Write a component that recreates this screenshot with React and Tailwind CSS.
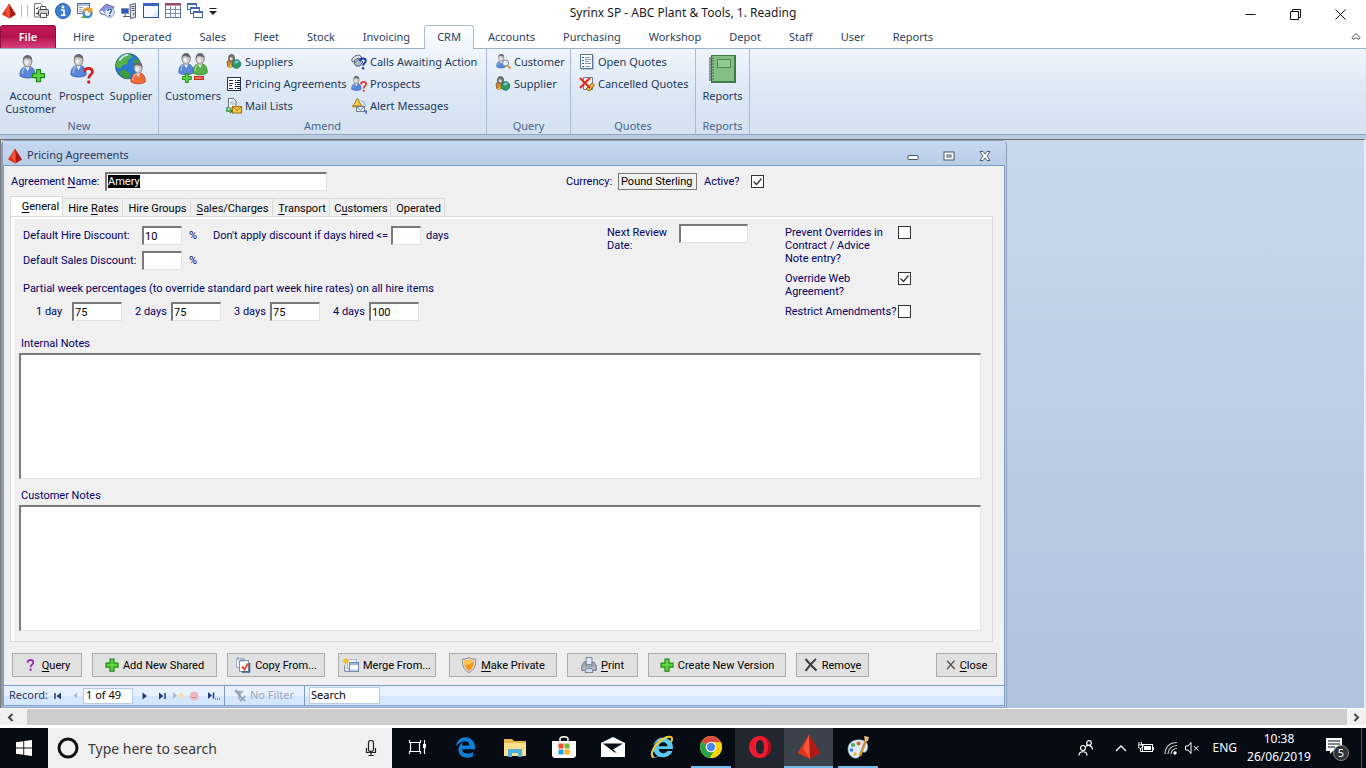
import React from "react";
import { FaEdgeLegacy, FaInternetExplorer } from "react-icons/fa6";

/* ---------- icon drawings ---------- */

const Svg = ({ size = 16, box = "0 0 16 16", className = "", children }) => (
  <svg width={size} height={size} viewBox={box} className={`block shrink-0 ${className}`} fill="none" aria-hidden="true">
    {children}
  </svg>
);

const Pyramid = ({ size = 16, className }) => (
  <Svg size={size} className={className}>
    <path d="M8 .5 1 11.500l7.500 4z" fill="#e2341d" />
    <path d="M8 .5 15 11.500l-6.500 4z" fill="#b01a14" />
    <path d="M8 .5 4.500 9l4 6.500z" fill="#f4573a" />
  </Svg>
);

const Person = ({ x = 0, y = 0, s = 1, body = "#5b86d8", dark = "#2c56ad" }) => (
  <g transform={`translate(${x} ${y}) scale(${s})`}>
    <path d="M1 22c0-6 2-9 6-10h4c4 1 6 4 6 10-4 3-12 3-16 0z" fill={body} stroke={dark} strokeWidth=".8" />
    <path d="M3.500 20c0-4 1-6 3-7" stroke="#fff" strokeOpacity=".45" strokeWidth="1.500" />
    <path d="m6.500 12 2.500 5 2.500-5z" fill="#eef3fb" />
    <ellipse cx="9" cy="6.500" rx="4.600" ry="6" fill="#c9c9c9" stroke="#6b6b6b" strokeWidth=".8" />
    <path d="M4.300 6C4 2 6 .2 9 .2S14.200 2 13.700 6C12.500 3.500 10 4 7.500 3.200 6 3.500 5 4 4.300 6z" fill="#6a6a6a" />
    <ellipse cx="8" cy="8" rx="2" ry="2.600" fill="#ececec" />
  </g>
);

const Plus = ({ x = 0, y = 0, s = 1 }) => (
  <path
    transform={`translate(${x} ${y}) scale(${s})`}
    d="M4.500.7h4v4h4v4h-4v4h-4v-4h-4v-4h4z"
    fill="#5fd33c"
    stroke="#1f8a1b"
    strokeWidth="1.200"
  />
);

const Question = ({ x = 0, y = 0, s = 1, color = "#d3201c" }) => (
  <g transform={`translate(${x} ${y}) scale(${s})`}>
    <path d="M1.500 5C1.500 2.500 3 1.300 5.200 1.300S9 2.500 9 4.500C9 7.500 5.500 7 5.500 11" stroke={color} strokeWidth="2.500" />
    <circle cx="5.500" cy="14.300" r="1.600" fill={color} />
  </g>
);

const Globe = ({ x = 0, y = 0, s = 1 }) => (
  <g transform={`translate(${x} ${y}) scale(${s})`}>
    <circle cx="12" cy="12" r="11.500" fill="#2b79cf" stroke="#1d4f98" strokeWidth=".8" />
    <path d="M2 7C5 1 11 0 14 1l2 3-4 2-1 4-4 1-2 3-4-1c-1-2 0-4 1-6z" fill="#58b147" />
    <path d="M4 17l5-2 4 3 0 5C8 24 5 21 4 17zM16 6l5 0c2 3 2 6 2 8l-4-2z" fill="#3f9c3c" />
    <path d="M4 7c2-3 5-5 8-5.500" stroke="#cfe6fb" strokeWidth="1.500" />
  </g>
);

const AccountCustomerIcon = () => (
  <Svg size={32} box="0 0 32 32"><Person x={4} y={2} s={0.95} /><Plus x={17} y={16} /></Svg>
);
const ProspectIcon = () => (
  <Svg size={32} box="0 0 32 32"><Person x={4} y={1} s={0.95} /><Question x={17} y={14} s={1.05} /></Svg>
);
const SupplierIcon = () => (
  <Svg size={32} box="0 0 32 32">
    <Globe x={0} y={0} s={1.1} />
    <Person x={15} y={9} s={0.9} body="#ef6a3a" dark="#b93a18" />
  </Svg>
);
const CustomersIcon = () => (
  <Svg size={32} box="0 0 32 32">
    <Person x={15} y={0} s={0.9} body="#55b04a" dark="#2d7c28" />
    <Person x={1} y={0} s={0.9} />
    <Plus x={5} y={20} s={0.75} />
    <rect x="17.500" y="23.500" width="9" height="3" fill="#f26b5b" stroke="#c62c20" />
  </Svg>
);
const ReportsBookIcon = () => (
  <Svg size={32} box="0 0 32 32">
    <rect x="4" y="2" width="25" height="28" fill="#3c7a44" />
    <rect x="4.500" y="2.500" width="23" height="26" fill="#86bf86" stroke="#3f7f47" />
    <rect x="10.500" y="6.500" width="13" height="8" fill="#93c993" stroke="#4b8850" />
    {[5, 8, 11, 14, 17, 20, 23, 26].map((y) => (
      <path key={y} d={`M2 ${y}h5M2 ${y + 1.2}h3`} stroke="#4a5a4c" strokeWidth=".9" />
    ))}
  </Svg>
);

const SuppliersSmall = () => (
  <Svg>
    <path d="M1 8c1-3 8-3 9 0v2L6 13H2z" fill="#d9862f" stroke="#6d4a1c" strokeWidth=".8" />
    <ellipse cx="5.500" cy="4" rx="3" ry="3.500" fill="#7a7a6c" stroke="#45453b" strokeWidth=".8" />
    <ellipse cx="5.200" cy="5" rx="1.500" ry="1.800" fill="#dedad0" />
    <path d="M2 13l3-3 1 4z" fill="#e9c02e" />
    <circle cx="10.500" cy="10" r="4.300" fill="#2f9a62" stroke="#1c6b6b" strokeWidth=".8" />
    <path d="M8 8.500c1-2 4-2 5-1l-2.500 2z" fill="#7ccaf0" />
  </Svg>
);
const AgreementsSmall = () => (
  <Svg>
    <rect x="1.500" y="1.500" width="13" height="13" fill="#fff" stroke="#26344e" />
    <path d="M3 4.500h4M3 7.500h4M3 9.500h3M3 12.500h4" stroke="#1d2b46" />
    <path d="M9 4.500h1M11 4.500h3M9 6.500h5M9 8.500h1M11 8.500h3M9 10.500h5M9 12.500h1M11 12.500h3" stroke="#1d2b46" />
  </Svg>
);
const MailSmall = () => (
  <Svg>
    <path d="M2.500.5h5l2.500 2.500v7h-7.500z" fill="#fff" stroke="#5f6f86" />
    <path d="M4 4h4M4 6h5" stroke="#8fa0b8" />
    <path d="M1 9v4h5M4 11l2 2-2 2" stroke="#2d9b34" strokeWidth="1.500" />
    <rect x="6.500" y="8.500" width="9" height="6.500" fill="#f4c744" stroke="#a27414" />
    <path d="m7 9 4 3.500L15 9" stroke="#a27414" />
  </Svg>
);
const CallsSmall = () => (
  <Svg>
    <path d="M.700 6c1-4 7-6 9-4l1 2-2 1-1-1-4 2v2H1.500z" fill="#dfe6ee" stroke="#4a586d" />
    <path d="M3 9l5-4 4 3-3 4H5z" fill="#aebccc" stroke="#4a586d" />
    <Question x={8} y={3.500} s={0.75} color="#1238b8" />
  </Svg>
);
const ProspectSmall = () => (
  <Svg><Person x={0} y={0} s={0.6} /><Question x={9} y={5} s={0.68} color="#e0392c" /></Svg>
);
const AlertSmall = () => (
  <Svg>
    <path d="M5.500 1h2l.5 3 3 4H2l2.500-4z" fill="#f7cf4d" stroke="#a8801a" />
    <path d="M1 8.500h11" stroke="#b98a1a" strokeWidth="1.500" />
    <rect x="5.500" y="8.500" width="8" height="5" fill="#e8eef6" stroke="#6c7c92" />
    <path d="m6 9 3.500 3L13 9" stroke="#6c7c92" />
    <path d="M13 13h3v2h-2" stroke="#2350b0" strokeWidth="1.200" />
    <path d="M10 3c3 0 4 2 4 5" stroke="#8fa0b8" />
  </Svg>
);
const CustomerQuerySmall = () => (
  <Svg>
    <Person x={1} y={0} s={0.58} />
    <circle cx="10.500" cy="9" r="3" fill="#e6f1fb" stroke="#7a8797" />
    <path d="m12.500 11.500 3 3" stroke="#e39a2e" strokeWidth="2" />
  </Svg>
);
const OpenQuotesSmall = () => (
  <Svg>
    <rect x="2.500" y="1.500" width="12" height="14" fill="#7b93b8" />
    <rect x="1.500" y=".5" width="12" height="14" fill="#fff" stroke="#5d7399" />
    <path d="M3 3.500h2M3 6.500h2M3 9.500h2M3 12.500h2" stroke="#2f5fae" />
    <path d="M6 3.500h5M6 5.500h6M6 7.500h4M6 9.500h6M6 12.500h5" stroke="#8597b5" />
  </Svg>
);
const CancelledSmall = () => (
  <Svg>
    <path d="M4.500 1.500h9v12h-9z" fill="#f4f6f9" stroke="#6c7c92" />
    <path d="M7 13l6-6 2.500 2-5 6z" fill="#f0b840" stroke="#8c6414" />
    <path d="m1 2 10 10M11 2 1 12" stroke="#e3301f" strokeWidth="2.300" />
  </Svg>
);

const PrintPreviewIcon = () => (
  <Svg>
    <path d="M1.500.5h6l2 2V14h-8z" fill="#fff" stroke="#777" />
    <path d="M3 5l1 1 1.500-2M3 10l1 1 1.500-2" stroke="#333" />
    <path d="M7.500 6.500V3.500h5l1 3" fill="#fff" stroke="#555" />
    <rect x="5.500" y="6.500" width="10" height="6" rx="1" fill="#c9ccd0" stroke="#444" />
    <path d="M7.500 10.500h6v4h-6z" fill="#fff" stroke="#555" />
  </Svg>
);
const InfoIcon = () => (
  <Svg>
    <circle cx="8" cy="8" r="7.500" fill="#3f7fd0" stroke="#2a5da8" />
    <circle cx="8" cy="4" r="1.400" fill="#fff" />
    <path d="M6 7h3v5M5.800 12.200h4.600" stroke="#fff" strokeWidth="1.600" />
  </Svg>
);
const RefreshPageIcon = () => (
  <Svg>
    <rect x=".5" y=".5" width="12" height="10" fill="#fff" stroke="#4b6ea8" />
    <path d="M2 4.500h4M2 6.500h3M2 8.500h4" stroke="#7e97c0" />
    <path d="M1 2h11" stroke="#a9c2e6" strokeWidth="2" />
    <circle cx="10.500" cy="10" r="4" fill="#eaf3fd" stroke="#3f86d6" strokeWidth="2.300" />
    <path d="M6.500 9a4 4 0 0 1 7.500-1.500M11 8.500h3.500V5" stroke="#f0a12c" strokeWidth="2" />
    <path d="M4 15l3-3 2.500 3z" fill="#4aa33c" />
  </Svg>
);
const HelpBookIcon = () => (
  <Svg>
    <path d="M1 7 7 1l8 3-5 8-8-1z" fill="#8e8fd8" stroke="#7070b8" />
    <path d="M1 7v3l8 3 1-1" fill="#fff" stroke="#6f6fb6" />
    <circle cx="10.500" cy="9.500" r="4.800" fill="#dfe9fb" stroke="#7f98d0" />
    <Question x={8} y={5.500} s={0.5} color="#2446a8" />
  </Svg>
);
const ServerIcon = () => (
  <Svg>
    <path d="M9 1.500 14.500.5v14l-5 1z" fill="#d7dbe2" stroke="#596477" />
    <path d="M10.500 3.500h3M10.500 5.500h3M10.500 7.500h3" stroke="#596477" />
    <rect x="12" y="10" width="1.500" height="2" fill="#39a33a" />
    <rect x=".5" y="5.500" width="7" height="5" fill="#2e55c8" stroke="#8a93a6" />
    <path d="M4 11v2M2 13.500h7" stroke="#596477" />
  </Svg>
);
const WindowIcon = () => (
  <Svg>
    <rect x=".5" y=".5" width="15" height="14" fill="#f7faff" stroke="#30559c" />
    <path d="M0 1.500h16" stroke="#3a65b8" strokeWidth="3" />
    <path d="M8 14l7-7v7z" fill="#dfeafa" />
  </Svg>
);
const DatasheetIcon = () => (
  <Svg>
    <rect x=".5" y=".5" width="15" height="14" fill="#fff" stroke="#5b6fa6" />
    <path d="M0 1.500h16" stroke="#a8405a" strokeWidth="2" />
    <path d="M5.500 3v12M10.500 3v12M1 6.500h14M1 10.500h14" stroke="#7b8cbb" />
  </Svg>
);
const CascadeIcon = () => (
  <Svg>
    <g fill="#fff" stroke="#3f66a8">
      <rect x=".5" y=".5" width="9" height="6" />
      <rect x="3.500" y="4.500" width="9" height="6" />
      <rect x="6.500" y="8.500" width="9" height="6" />
    </g>
    <path d="M1 1.500h8M4 5.500h8M7 9.500h8" stroke="#3f66a8" />
  </Svg>
);

const PlusIcon = () => <Svg size={14} box="0 0 14 14"><Plus x={0.5} y={0.5} /></Svg>;
const PurpleQuestion = () => <Svg size={14} box="0 0 14 14"><Question x={2.500} y={1} s={0.75} color="#9b2fae" /></Svg>;
const CopyIcon = () => (
  <Svg>
    <path d="M1.500 1.500h6v9h-6z" fill="#eef2f8" stroke="#a3b0c4" />
    <path d="M4.500 3.500h9v11h-9z" fill="#fff" stroke="#7c92b4" />
    <path d="M3 0v3M6 1v4M9 1v4" stroke="#8393ab" />
    <path d="M14.500 6v9H7" stroke="#3e5c8f" strokeWidth="1.500" />
    <path d="m7 9.500 2.500 3L13 6.500" stroke="#e8552c" strokeWidth="2" />
  </Svg>
);
const MergeIcon = () => (
  <Svg>
    <rect x="4.500" y="2.500" width="9" height="9" fill="#e9f0f9" stroke="#a5b9d4" />
    <rect x="6.500" y="5.500" width="9" height="9" fill="#fff" stroke="#6f8ab0" />
    <path d="M7 7h8" stroke="#9db5d6" strokeWidth="2" />
    <path d="M7 13h8" stroke="#c7d6ea" strokeWidth="2" />
    <path d="M0 4h6M3 1v6M1 2l4 4M5 2 1 6" stroke="#f2c230" strokeWidth="1.300" />
    <path d="M1.500 8v6.500H6" stroke="#8393ab" />
  </Svg>
);
const ShieldIcon = () => (
  <Svg>
    <path d="M8 .5C6 2 4 2 1.500 2c-.5 6 1 11 6.500 13.500C13.500 13 15 8 14.500 2 12 2 10 2 8 .5z" fill="#e0e0e0" stroke="#8d8d8d" />
    <path d="M8 2.300C6.500 3.500 5 3.500 3 3.500c0 5 1.500 8.500 5 10.500 3.500-2 5-5.500 5-10.500-2 0-3.500 0-5-1.200z" fill="#f59a1d" />
    <path d="M8 2.300C6.500 3.500 5 3.500 3 3.500c0 2 .2 3.500.8 5L12.900 5V3.500c-2 0-3.400 0-4.900-1.200z" fill="#fcc45a" />
  </Svg>
);
const PrinterIcon = () => (
  <Svg>
    <path d="M5 .5h6v7H5z" fill="#dbe7f7" stroke="#7d8795" />
    <path d="M3 5 .700 9v4.500h14.600V9L13 5h-2v4H5V5z" fill="#a4a8b1" stroke="#6d737e" strokeWidth=".8" />
    <path d="M2 11h12" stroke="#d9dce2" />
    <path d="M5 11.500h6l1 4H4z" fill="#cfe0f6" stroke="#7d8795" />
  </Svg>
);
const CrossIcon = ({ size = 14, color = "#3c3c3c" }) => (
  <Svg size={size} box="0 0 14 14"><path d="M1.500 1c3 3.500 7 8 11 11.500M12 1C8 4.500 5 8.500 1.500 13" stroke={color} strokeWidth="2" /></Svg>
);

/* ---------- title bar and tabs ---------- */

const quickTools = [
  ["Print preview", PrintPreviewIcon], ["Information", InfoIcon], ["Refresh", RefreshPageIcon], ["Help", HelpBookIcon],
  ["Server", ServerIcon], ["Form view", WindowIcon], ["Datasheet", DatasheetIcon], ["Cascade", CascadeIcon],
];

function TitleBar() {
  return (
    <header className="grid h-[25px] grid-cols-[1fr_auto_1fr] items-center">
      <div className="flex items-center pb-1">
        <Pyramid size={16} className="ml-px" />
        <span className="ml-1 h-3 w-[7px] border-x border-[#b8b8b8]" />
        <div className="ml-[5px] flex gap-[6px]">
          {quickTools.map(([name, Icon]) => (
            <button key={name} aria-label={name} className="h-4 w-4"><Icon /></button>
          ))}
        </div>
        <button aria-label="Customize toolbar" className="ml-[6px]">
          <Svg size={8} box="0 0 8 8"><path d="M.5 1.500h7" stroke="#222" /><path d="M0 4h8L4 8z" fill="#222" /></Svg>
        </button>
      </div>
      <h1 className="text-[12px] leading-4 text-[#1a1a1a]">Syrinx SP - ABC Plant &amp; Tools, 1. Reading</h1>
      <div className="flex items-center justify-end gap-[34px] pt-[3px] pr-5">
        <button aria-label="Minimize"><Svg size={11} box="0 0 11 11"><path d="M.5 5.500h10" stroke="#111" /></Svg></button>
        <button aria-label="Restore"><Svg size={11} box="0 0 11 11"><path d="M.5 2.500h8v8h-8zM2.500 2V.5h8v8H9" stroke="#111" /></Svg></button>
        <button aria-label="Close"><Svg size={11} box="0 0 11 11"><path d="m.5.5 10 10M10.500.5l-10 10" stroke="#111" /></Svg></button>
      </div>
    </header>
  );
}

const tabs = ["Hire", "Operated", "Sales", "Fleet", "Stock", "Invoicing", "CRM", "Accounts", "Purchasing", "Workshop", "Depot", "Staff", "User", "Reports"];

function RibbonTabs() {
  return (
    <nav className="flex h-6 items-end border-b border-[#9fb2c9] text-[11px] text-[#2b4163]">
      <button className="mr-[3px] h-[23px] w-14 rounded-t-[3px] border border-b-0 border-[#8e0d40] bg-linear-to-b from-[#c2185b] via-[#b3114f] to-[#d93f7d] pt-px font-semibold text-white">File</button>
      {tabs.map((t) =>
        t === "CRM" ? (
          <button key={t} className="-mb-px h-6 rounded-t-[3px] border border-b-0 border-[#a9bbd2] bg-linear-to-b from-white to-[#eff5fc] px-3">{t}</button>
        ) : (
          <button key={t} className="h-[23px] px-[14px] pt-[2px]">{t}</button>
        )
      )}
      <button aria-label="Collapse ribbon" className="mr-[5px] mb-[7px] ml-auto">
        <Svg size={10} box="0 0 10 10"><path d="M1 6.500 5 2.500l4 4-1 1.500H6.500L5 6.500 3.500 8H2z" stroke="#444" /></Svg>
      </button>
    </nav>
  );
}

/* ---------- ribbon ---------- */

const Group = ({ label, className, children }) => (
  <section className={`flex flex-col border-r border-[#a9bbd2] ${className}`}>
    <div className="flex flex-1">{children}</div>
    <h2 className="h-4 text-center leading-4 text-[#4a648c]">{label}</h2>
  </section>
);
const Large = ({ icon: Icon, className, children }) => (
  <button className={`flex flex-col items-center pt-1 leading-[13px] ${className}`}>
    <Icon />
    <span className="mt-1 block w-full text-center">{children}</span>
  </button>
);
const Small = ({ icon: Icon, children }) => (
  <button className="flex h-[22px] items-center gap-[3px] whitespace-nowrap"><Icon />{children}</button>
);

function Ribbon() {
  return (
    <div className="flex h-[86px] border-b border-[#8ea4c1] bg-linear-to-b from-[#eff5fc] via-[#dde8f5] to-[#d5e1f0] text-[11px] text-[#1e395b]">
      <Group label="New" className="w-[159px]">
        <Large icon={AccountCustomerIcon} className="ml-[5px] w-[51px]">Account<br />Customer</Large>
        <Large icon={ProspectIcon} className="w-[51px]">Prospect</Large>
        <Large icon={SupplierIcon} className="w-[48px]">Supplier</Large>
      </Group>
      <Group label="Amend" className="w-[328px]">
        <Large icon={CustomersIcon} className="ml-[5px] w-[58px]">Customers</Large>
        <div className="ml-1 w-[125px] pt-[2px]">
          <Small icon={SuppliersSmall}>Suppliers</Small>
          <Small icon={AgreementsSmall}>Pricing Agreements</Small>
          <Small icon={MailSmall}>Mail Lists</Small>
        </div>
        <div className="pt-[2px]">
          <Small icon={CallsSmall}>Calls Awaiting Action</Small>
          <Small icon={ProspectSmall}>Prospects</Small>
          <Small icon={AlertSmall}>Alert Messages</Small>
        </div>
      </Group>
      <Group label="Query" className="w-[84px]">
        <div className="pt-[2px] pl-2">
          <Small icon={CustomerQuerySmall}>Customer</Small>
          <Small icon={SuppliersSmall}>Supplier</Small>
        </div>
      </Group>
      <Group label="Quotes" className="w-[125px]">
        <div className="pt-[2px] pl-2">
          <Small icon={OpenQuotesSmall}>Open Quotes</Small>
          <Small icon={CancelledSmall}>Cancelled Quotes</Small>
        </div>
      </Group>
      <Group label="Reports" className="w-[54px]">
        <Large icon={ReportsBookIcon} className="w-full">Reports</Large>
      </Group>
    </div>
  );
}

/* ---------- form ---------- */

const sunken = "border-t-2 border-l-2 border-r border-b border-t-[#7a7a7a] border-l-[#7a7a7a] border-r-[#e3e3e3] border-b-[#e3e3e3] bg-white text-black";

const Field = ({ id, className, value = "", label }) => (
  <input id={id} aria-label={label} defaultValue={value} className={`h-[19px] pl-px outline-none ${sunken} ${className}`} />
);

const Tick = ({ id, checked }) => (
  <span className="grid h-[13px] w-[13px] shrink-0">
    <input id={id} type="checkbox" defaultChecked={checked} className="peer col-start-1 row-start-1 h-[13px] w-[13px] appearance-none border border-[#333] bg-white" />
    <svg viewBox="0 0 13 13" className="pointer-events-none invisible col-start-1 row-start-1 h-[13px] w-[13px] peer-checked:visible" fill="none" aria-hidden="true">
      <path d="m2.500 6.500 3 3 5-6" stroke="#333" strokeWidth="1.300" />
    </svg>
  </span>
);

const U = ({ children }) => <span className="underline underline-offset-2">{children}</span>;

const formTabs = [
  ["w-[60px]", <>Hire <U>R</U>ates</>], ["w-[68px]", <>Hire Groups</>], ["w-[82px]", <><U>S</U>ales/Charges</>],
  ["w-[57px]", <><U>T</U>ransport</>], ["w-[61px]", <>C<U>u</U>stomers</>], ["w-[54px]", <>Operated</>],
];

const PushButton = ({ icon, className, children }) => (
  <button className={`flex h-6 shrink-0 items-center justify-center gap-1 border border-[#adadad] bg-[#e1e1e1] whitespace-nowrap text-black ${className}`}>
    {icon}
    <span>{children}</span>
  </button>
);

function GeneralPanel() {
  return (
    <div className="mr-[11px] ml-[6px] flex flex-1 flex-col border border-[#d9d9d9] bg-[#f0f0f0] pr-[11px] pb-[10px] shadow-[inset_3px_2px_0_#fff]">
      <div className="flex items-start pt-[9px] pl-3">
        <div className="w-[584px] shrink-0 whitespace-nowrap">
          <div className="flex h-[19px] items-center">
            <label htmlFor="hireDisc" className="w-[119px]">Default Hire Discount:</label>
            <Field id="hireDisc" value="10" className="w-10" />
            <span className="ml-[7px] w-6">%</span>
            <label htmlFor="minDays" className="w-[178px]">Don't apply discount if days hired &lt;=</label>
            <Field id="minDays" className="w-[30px]" />
            <span className="ml-[5px]">days</span>
          </div>
          <div className="mt-[6px] flex h-[19px] items-center">
            <label htmlFor="salesDisc" className="w-[119px]">Default Sales Discount:</label>
            <Field id="salesDisc" className="w-10" />
            <span className="ml-[7px]">%</span>
          </div>
          <p className="mt-3">Partial week percentages (to override standard part week hire rates) on all hire items</p>
          <div className="mt-[7px] flex gap-[13px] pl-[13px]">
            {[["1 day", "75"], ["2 days", "75"], ["3 days", "75"], ["4 days", "100"]].map(([l, v]) => (
              <div key={l} className="flex items-center">
                <label htmlFor={l} className="w-9">{l}</label>
                <Field id={l} value={v} className="w-[50px]" />
              </div>
            ))}
          </div>
        </div>
        <div className="flex w-[178px] items-start">
          <label htmlFor="review" className="w-[72px] pr-1">Next Review Date:</label>
          <Field id="review" className="-mt-[2px] w-[69px]" />
        </div>
        <div className="flex flex-col gap-[7px]">
          {[["prevent", <>Prevent Overrides in<br />Contract / Advice<br />Note entry?</>, false], ["web", <>Override Web<br />Agreement?</>, true], ["restrict", "Restrict Amendments?", false]].map(([id, l, c]) => (
            <div key={id} className="flex items-start">
              <label htmlFor={id} className="w-[113px] whitespace-nowrap">{l}</label>
              <Tick id={id} checked={c} />
            </div>
          ))}
        </div>
      </div>
      <div className="flex flex-1 flex-col pt-4 pl-2">
        <label htmlFor="internal" className="pl-[2px]">Internal Notes</label>
        <textarea id="internal" className={`mt-[3px] flex-1 resize-none outline-none ${sunken}`} />
        <label htmlFor="customer" className="mt-[10px] pl-[2px]">Customer Notes</label>
        <textarea id="customer" className={`mt-[3px] flex-1 resize-none outline-none ${sunken}`} />
      </div>
    </div>
  );
}

function RecordBar() {
  const nav = "#1e3f7d";
  return (
    <div className="flex h-[21px] items-stretch border border-[#7d9cc3] bg-linear-to-b from-[#e8f1ff] from-50% to-[#d5e6ff] to-50% font-['Noto_Sans',sans-serif] text-[#1e395b]">
      <div className="flex w-[221px] items-center border-r border-[#7d9cc3] pl-[5px]">
        <label htmlFor="recno" className="w-[45px]">Record:</label>
        <button aria-label="First record"><Svg size={8} box="0 0 8 8"><path d="M1 1v6" stroke={nav} strokeWidth="1.500" /><path d="M7 .5v7L2.500 4z" fill={nav} /></Svg></button>
        <button aria-label="Previous record" className="ml-[10px]"><Svg size={7} box="0 0 8 8"><path d="M6 .5v7L1.500 4z" fill="#a9bbd6" /></Svg></button>
        <input id="recno" defaultValue="1 of 49" className="ml-1 h-4 w-[50px] border border-[#b5cbea] bg-white pl-[2px] text-black outline-none" />
        <button aria-label="Next record" className="ml-2"><Svg size={8} box="0 0 8 8"><path d="M1.500.5v7L6 4z" fill={nav} /></Svg></button>
        <button aria-label="Last record" className="ml-[9px]"><Svg size={8} box="0 0 8 8"><path d="M7 1v6" stroke={nav} strokeWidth="1.500" /><path d="M1 .5v7L5.500 4z" fill={nav} /></Svg></button>
        <button aria-label="New record" className="ml-[6px]"><Svg size={13} box="0 0 13 8"><path d="M1 .5v7L5 4z" fill="#a9bbd6" /><path d="M6 4h6M9 1v6M7 2l4 4M11 2 7 6" stroke="#efe3ad" strokeWidth="1.500" /></Svg></button>
        <button aria-label="Stop" className="ml-1"><Svg size={10} box="0 0 10 10"><circle cx="5" cy="5" r="4.500" fill="#e8b9bd" /><path d="M3 6.500h4" stroke="#d08d93" /></Svg></button>
        <button aria-label="Go to last" className="ml-2"><Svg size={13} box="0 0 13 10"><path d="M1 1.500v7L5 5z" fill={nav} /><path d="M6.500 2v6" stroke={nav} strokeWidth="1.500" /><path d="M8 8.500h1M10 8.500h1M12 8.500h1" stroke={nav} /></Svg></button>
      </div>
      <button className="flex w-20 items-center gap-[3px] border-r border-[#7d9cc3] pl-2 text-[#9aa7b8]">
        <Svg size={14}><path d="M1 2h11L8.500 7v6L6 11V7z" fill="#a6b0bd" /><path d="m8 8 6 6M14 8l-6 6M3 1l9 12" stroke="#8e99a8" strokeWidth="1.500" /></Svg>
        No Filter
      </button>
      <input aria-label="Search" defaultValue="Search" className="my-px ml-1 w-[71px] border border-[#b5cbea] bg-white pl-px text-black outline-none" />
    </div>
  );
}

function AgreementWindow() {
  return (
    <section className="flex w-full max-w-[1006px] flex-col rounded-t-[5px] border border-l-2 border-[#8c9fb9] bg-[#bdd1ea] pr-px pb-px text-[11px]">
      <div className="flex h-[24px] items-center bg-linear-to-b from-[#c6d8ef] to-[#b9cde7] pt-[5px] pr-[14px] pl-1">
        <Pyramid size={16} />
        <h2 className="ml-1 flex-1 font-['Noto_Sans',sans-serif] text-[#1e395b]">Pricing Agreements</h2>
        <div className="flex items-center gap-6">
          <button aria-label="Minimize form"><Svg size={12} box="0 0 12 12"><rect x="1" y="5.500" width="10" height="4" rx=".5" fill="#fff" stroke="#45566f" /></Svg></button>
          <button aria-label="Maximize form"><Svg size={12} box="0 0 12 12"><rect x="1" y="2" width="10" height="8" fill="#fff" stroke="#45566f" /><rect x="4" y="5" width="4" height="2" stroke="#45566f" /></Svg></button>
          <button aria-label="Close form"><Svg size={12} box="0 0 12 12"><path d="M1 1.500h3l2 2.500 2-2.500h3L8 6l3 4.500H8L6 8l-2 2.500H1L4 6z" fill="#fff" stroke="#45566f" /></Svg></button>
        </div>
      </div>
      <div className="flex flex-1 flex-col border border-b-0 border-[#7d9cc3] bg-[#f0f0f0] font-[Roboto,'Liberation_Sans',sans-serif] leading-[13px] text-[#000066]">
        <div className="flex h-[30px] items-center pl-[7px]">
          <label htmlFor="agreement" className="w-[94px]">Agreement <U>N</U>ame:</label>
          <div className={`flex h-[19px] w-[222px] items-center ${sunken}`}>
            <input id="agreement" defaultValue="Amery" className="ml-px h-[13px] w-8 bg-black text-white outline-none" />
          </div>
          <label htmlFor="currency" className="ml-[239px] w-[52px]">Currency:</label>
          <input id="currency" readOnly defaultValue="Pound Sterling" className="h-[17px] w-[79px] border border-[#7a7a7a] bg-[#f0f0f0] pl-[2px] text-black outline-none" />
          <label htmlFor="active" className="ml-[7px] w-[47px]">Active?</label>
          <Tick id="active" checked />
        </div>
        <div className="-mb-px flex h-[21px] items-end pl-[6px] text-black">
          <button className="h-[21px] w-[53px] border border-b-0 border-[#d9d9d9] bg-white pb-[2px] pl-2 text-center"><U>G</U>eneral</button>
          {formTabs.map(([w, t], i) => (
            <button key={i} className={`h-[19px] border-t border-r border-[#dcdcdc] pl-[2px] whitespace-nowrap ${w}`}>{t}</button>
          ))}
        </div>
        <GeneralPanel />
        <div className="flex gap-[10px] pt-[11px] pr-[7px] pb-2 pl-2">
          <PushButton className="w-[70px]" icon={<PurpleQuestion />}><U>Q</U>uery</PushButton>
          <PushButton className="w-[125px]" icon={<PlusIcon />}>Add New Shared</PushButton>
          <div className="flex gap-[13px]">
            <PushButton className="w-[98px]" icon={<CopyIcon />}>Cop<U>y</U> From...</PushButton>
            <PushButton className="w-[98px]" icon={<MergeIcon />}>Merge From...</PushButton>
            <PushButton className="w-[108px]" icon={<ShieldIcon />}><U>M</U>ake Private</PushButton>
          </div>
          <PushButton className="w-[71px]" icon={<PrinterIcon />}><U>P</U>rint</PushButton>
          <PushButton className="w-[138px]" icon={<PlusIcon />}>Create New Version</PushButton>
          <PushButton className="w-[73px]" icon={<CrossIcon />}>Remo<U>v</U>e</PushButton>
          <PushButton className="ml-auto w-[61px]" icon={<CrossIcon size={10} color="#555" />}><U>C</U>lose</PushButton>
        </div>
      </div>
      <RecordBar />
    </section>
  );
}

/* ---------- scroll bar and taskbar ---------- */

function ScrollBar() {
  return (
    <div className="flex h-5 items-center border-t border-b-3 border-t-white border-b-white bg-[#f0f0f0]">
      <button aria-label="Scroll left" className="flex w-[27px] pl-[6px]"><Svg size={9} box="0 0 9 9"><path d="M6.500 1 3 4.500 6.500 8" stroke="#444" strokeWidth="2" /></Svg></button>
      <div className="h-full flex-1 bg-[#cdcdcd]" />
      <button aria-label="Scroll right" className="flex w-[19px] justify-center"><Svg size={9} box="0 0 9 9"><path d="M2.500 1 6 4.500 2.500 8" stroke="#444" strokeWidth="2" /></Svg></button>
    </div>
  );
}

const TaskViewIcon = () => (
  <Svg size={18} box="0 0 18 18"><path d="M1.500 2v2.500h11V2M1.500 16v-2.500h11V16M2.500 4.500v9M11.500 4.500v9" stroke="#fff" strokeWidth="1.200" /><path d="M16.500 2v14" stroke="#fff" strokeWidth="1.200" /><rect x="15" y="6" width="3" height="4" fill="#fff" /></Svg>
);
const FolderIcon = () => (
  <Svg size={24} box="0 0 24 24"><path d="M1 4h8l2 2h12v15H1z" fill="#e8b84a" /><path d="M1 8h22v13H1z" fill="#fbe08d" /><path d="M5 22v-8h14v8h-4v-4H9v4z" fill="#4fb0e0" /></Svg>
);
const StoreIcon = () => (
  <Svg size={24} box="0 0 24 24"><path d="M8 7V4c0-3 8-3 8 0v3" stroke="#fff" strokeWidth="1.500" /><path d="M0 6h24v15l-2 2H2l-2-2z" fill="#fff" /><path d="M6.500 8.500h5v5h-5z" fill="#f0512a" /><path d="M12.500 8.500h5v5h-5z" fill="#7db928" /><path d="M6.500 14.500h5v5h-5z" fill="#1ba1e8" /><path d="M12.500 14.500h5v5h-5z" fill="#fab515" /></Svg>
);
const MailIcon = () => (
  <Svg size={24} box="0 0 24 24"><path d="M0 8 12 2l12 6v14H0z" fill="#fff" /><path d="M2 8.500h20L12 14.500l4 3.500-3-1-6-4.500z" fill="#0a0d14" /></Svg>
);
const ChromeIcon = () => (
  <Svg size={24} box="0 0 24 24">
    <circle cx="12" cy="12" r="11" fill="#fcd209" />
    <path d="M12 12 2.500 6.500A11 11 0 0 1 21.500 6.500L21.800 7z" fill="#dd4b3e" />
    <path d="M12 12 2.500 6.500A11 11 0 0 0 11 23l5-9z" fill="#2ba24c" />
    <path d="M12 7h9.700A11 11 0 0 1 11 23l5-9z" fill="#fcd209" />
    <circle cx="12" cy="12" r="5.300" fill="#fff" />
    <circle cx="12" cy="12" r="4.200" fill="#4a86ee" />
  </Svg>
);
const IeIcon = () => (
  <span className="grid place-items-center">
    <FaInternetExplorer size={22} color="#5ccbf2" className="col-start-1 row-start-1" />
    <Svg size={24} box="0 0 24 24" className="col-start-1 row-start-1"><path d="M4 22C-2 21 5 8 13 4c5-3 9-3 9 0 0 1-.5 2-1 3" stroke="#f2c52e" strokeWidth="2" /></Svg>
  </span>
);
const OperaIcon = () => (
  <Svg size={24} box="0 0 24 24"><path fillRule="evenodd" d="M12 1a11 11 0 1 0 0 22 11 11 0 0 0 0-22zm0 4c3 0 4 3.500 4 7s-1 7-4 7-4-3.500-4-7 1-7 4-7z" fill="#f01a2c" /><path d="M14 1.200C20 2 23 7 23 12s-3 10-9 10.800c5-2 6-6 6-10.800s-1-9-6-10.800z" fill="#a8101e" /></Svg>
);
const PaintIcon = () => (
  <Svg size={24} box="0 0 24 24">
    <path d="M2 14C2 7 9 4 15 5s8 5 6 10c-1 3-3 2-5 2s-1 5-5 6-9-3-9-9z" fill="#dceaf6" stroke="#8fb3d1" strokeWidth=".6" />
    <circle cx="7" cy="10" r="2" fill="#3fae49" /><circle cx="12.500" cy="8.500" r="2" fill="#e05a2b" /><circle cx="5.500" cy="15" r="1.800" fill="#3a78d8" /><circle cx="9" cy="19" r="1.800" fill="#e5bb22" />
    <path d="M20 5 14 21" stroke="#d08b34" strokeWidth="2.500" /><path d="M19 6 18 1l5 1-1 4z" fill="#e8c17a" />
  </Svg>
);

const apps = [
  ["Task view", <TaskViewIcon />, ""], ["Edge", <FaEdgeLegacy size={21} color="#0f7fd8" />, ""], ["File Explorer", <FolderIcon />, ""],
  ["Store", <StoreIcon />, ""], ["Mail", <MailIcon />, ""],
  ["Internet Explorer", <IeIcon />, ""], ["Chrome", <ChromeIcon />, "run"],
  ["Opera", <OperaIcon />, "bg"], ["Syrinx", <Pyramid size={26} />, "active"], ["Paint", <PaintIcon />, "run"],
];

function Taskbar() {
  return (
    <footer className="flex h-10 items-stretch bg-[#070b14] text-white">
      <button aria-label="Start" className="flex w-12 items-center justify-center">
        <Svg><path d="M0 2.200 7.300 1.200v6.300H0zM8.200 1 16 0v7.500H8.200zM0 8.400h7.300v6.300L0 13.700zM8.200 8.400H16V16l-7.800-1.100z" fill="#fff" /></Svg>
      </button>
      <div className="flex w-[344px] items-center bg-[#f0f0f0] pr-[13px] pl-[9px]">
        <Svg size={22} box="0 0 22 22"><circle cx="11" cy="11" r="9" stroke="#111" strokeWidth="3" /></Svg>
        <input aria-label="Type here to search" placeholder="Type here to search" className="ml-[9px] min-w-0 flex-1 bg-transparent text-[14px] outline-none placeholder:text-[#3a3a3a]" />
        <Svg><path d="M5.500 2.500a2.500 2 0 0 1 5 0v7a2.500 2 0 0 1-5 0zM3.500 8v4.500h9V8M8 12.500v3M5.500 15.500h5" stroke="#222" strokeWidth="1.200" /></Svg>
      </div>
      <div className="flex">
        {apps.map(([name, icon, state]) => (
          <button
            key={name}
            aria-label={name}
            className={`flex w-[49px] flex-col items-center ${state === "bg" ? "bg-[#22272f]" : ""} ${state === "active" ? "bg-[#3c424b]" : ""}`}
          >
            <span className="flex flex-1 items-center">{icon}</span>
            <span className={`h-[2px] ${state === "run" ? "w-10 bg-[#76b9ed]" : ""} ${state === "active" ? "w-full bg-[#76b9ed]" : ""}`} />
          </button>
        ))}
      </div>
      <div className="ml-auto flex items-center text-[12px] leading-[18px]">
        <button aria-label="People"><Svg size={16}><circle cx="5" cy="8" r="2.500" stroke="#fff" strokeWidth="1.200" /><path d="M1 15.500c0-5 8-5 8 0M8 6.500c1-1.500 6-2 6.500 3" stroke="#fff" strokeWidth="1.200" /><circle cx="11" cy="3" r="2.300" stroke="#fff" strokeWidth="1.200" /></Svg></button>
        <button aria-label="Show hidden icons" className="ml-[21px]"><Svg size={12} box="0 0 12 12"><path d="m1 9 5-5 5 5" stroke="#fff" strokeWidth="1.300" /></Svg></button>
        <button aria-label="Battery" className="ml-[11px]"><Svg size={16}><rect x="4.500" y="4.500" width="10" height="7" stroke="#fff" /><rect x="6" y="6" width="7" height="4" fill="#fff" /><path d="M15.500 7v3M1 2v3M3.500 2v3M0 5h5v2L2.500 8.500 0 7zM2.500 8v3.500H5" stroke="#fff" /></Svg></button>
        <button aria-label="Wi-Fi" className="ml-[10px]"><Svg size={14} box="0 0 14 14"><path d="M1 13C1 6 6 1.500 13 1.500M4 13c0-5 4-8.500 9-8.500M7 13c0-3 2.500-5.500 6-5.500" stroke="#ccc" strokeWidth="1.200" /><circle cx="11" cy="12" r="1.700" fill="#fff" /></Svg></button>
        <button aria-label="Muted" className="ml-[6px]"><Svg size={16}><path d="M1.500 6h2.500l3-3.500v11L4 10H1.500z" stroke="#fff" /><path d="m10 6 4.500 4.500M14.500 6 10 10.500" stroke="#fff" /></Svg></button>
        <button className="ml-3">ENG</button>
        <button className="ml-2 w-[68px] text-center">10:38<br />26/06/2019</button>
        <button aria-label="Notifications" className="ml-3">
          <Svg size={26} box="0 0 26 26"><path d="M1 3h16v13H8l-3 3v-3H1z" fill="#fff" /><path d="M3 6h12M3 9h12M3 12h7" stroke="#070b14" strokeWidth="1.200" /><circle cx="16" cy="18" r="7.500" fill="#333" stroke="#8a8a8a" /><text x="16" y="22" fontSize="11" textAnchor="middle" fill="#fff">5</text></Svg>
        </button>
        <span className="ml-[10px] h-10 w-[5px] border-l border-[#4a4f58]" />
      </div>
    </footer>
  );
}

export default function App() {
  return (
    <div className="flex h-screen flex-col overflow-hidden bg-white font-['Noto_Sans',sans-serif]">
      <TitleBar />
      <RibbonTabs />
      <Ribbon />
      <main className="flex min-h-0 flex-1 border-t-4 border-[#bccbe0] bg-[#b7c9e2]">
        <div className="flex flex-1 border-t border-r-2 border-l border-t-[#6b6b6b] border-r-[#e9eef5] border-l-[#7a7a7a] bg-linear-to-b from-[#c9d8ec] to-[#afc3dd]">
          <AgreementWindow />
        </div>
      </main>
      <ScrollBar />
      <Taskbar />
    </div>
  );
}
